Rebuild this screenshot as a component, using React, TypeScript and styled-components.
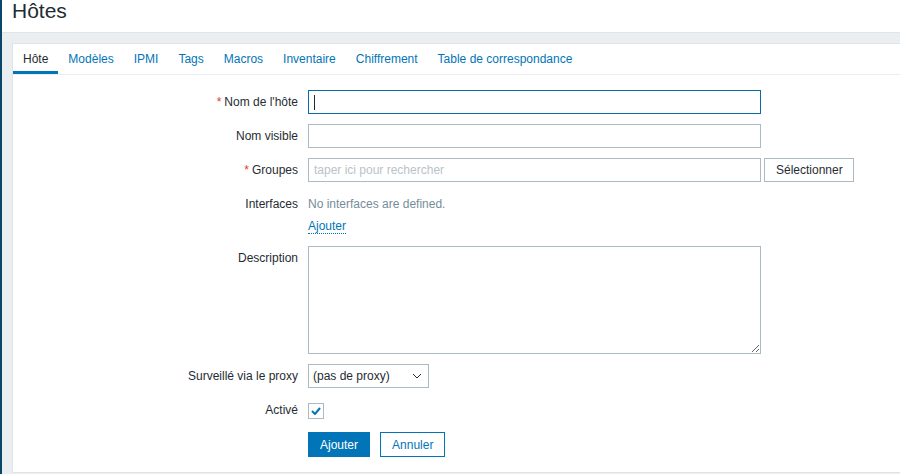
import React from "react";
import styled, { createGlobalStyle } from "styled-components";

const GlobalStyle = createGlobalStyle`
  html, body { margin: 0; padding: 0; }
  body {
    background: #ebeef0;
    overflow: hidden;
    font-family: "Liberation Sans", Arial, sans-serif;
    font-size: 12px;
    color: #1f2c33;
  }
  * { box-sizing: border-box; }
`;

const Page = styled.div`
  display: flex;
  width: 900px;
  height: 474px;
  overflow: hidden;
`;

const Sidebar = styled.div`
  width: 2px;
  flex: none;
  background: #0a466a;
`;

const Main = styled.div`
  flex: 1;
  min-width: 0;
  display: flex;
  flex-direction: column;
`;

const Header = styled.header`
  height: 33px;
  background: #ffffff;
  border-bottom: 1px solid #dfe4e7;
  padding-left: 10px;
`;

const Title = styled.h1`
  margin: -1px 0 0;
  font-size: 21px;
  line-height: 24px;
  font-weight: normal;
  color: #1f2c33;
`;

const Content = styled.div`
  padding: 10px 0 0 10px;
`;

const Panel = styled.section`
  width: 920px;
  background: #ffffff;
  border: 1px solid #dfe4e7;
  border-right: none;
`;

const TabBar = styled.nav`
  display: flex;
  height: 31px;
  border-bottom: 1px solid #ebeef0;
`;

const Tab = styled.a<{ $active?: boolean }>`
  display: block;
  height: 30px;
  padding: 1px 10px 0;
  line-height: 29px;
  color: ${(p) => (p.$active ? "#1f2c33" : "#0275b8")};
  text-decoration: none;
  box-shadow: ${(p) => (p.$active ? "inset 0 -3px 0 #0275b8" : "none")};
  white-space: nowrap;
`;

const Form = styled.div`
  display: grid;
  grid-template-columns: 285px 1fr;
  column-gap: 10px;
  row-gap: 10px;
  padding: 15px 0 15px;
  align-items: start;
`;

const Label = styled.label`
  text-align: right;
  line-height: 24px;
  color: #1f2c33;
  white-space: nowrap;
`;

const Required = styled.span`
  color: #e33734;
  margin-right: 3px;
`;

const Field = styled.div`
  display: flex;
  align-items: center;
  min-height: 24px;
`;

const Stack = styled.div`
  display: flex;
  flex-direction: column;
`;

const TextInput = styled.input`
  width: 453px;
  height: 24px;
  border: 1px solid #acbbc2;
  background: #fff;
  padding: 0 5px;
  font-family: inherit;
  font-size: 12px;
  color: #1f2c33;
  outline: none;
  &::placeholder { color: #b9c3c8; opacity: 1; }
`;

const FocusedBox = styled.div`
  width: 453px;
  height: 24px;
  border: 1px solid #0b6aa4;
  background: #fff;
  padding: 0 5px;
  display: flex;
  align-items: center;
`;

const Caret = styled.span`
  width: 1px;
  height: 15px;
  background: #1f2c33;
`;

const GrayButton = styled.button`
  height: 24px;
  margin-left: 3px;
  padding: 0 11px;
  border: 1px solid #acbbc2;
  background: #fff;
  color: #1f2c33;
  font-family: inherit;
  font-size: 12px;
  width: 90px;
`;

const Muted = styled.span`
  line-height: 24px;
  color: #768d99;
`;

const LinkLine = styled.div`
  height: 20px;
  padding-top: 4px;
  display: flex;
  align-items: flex-start;
`;

const DottedLink = styled.a`
  color: #0275b8;
  text-decoration: none;
  border-bottom: 1px dotted #0275b8;
  line-height: 13px;
`;

const TextArea = styled.textarea`
  display: block;
  width: 453px;
  height: 108px;
  border: 1px solid #acbbc2;
  background: #fff;
  margin: 0;
  padding: 4px 5px;
  font-family: inherit;
  font-size: 12px;
  outline: none;
  resize: both;
`;

const SelectBox = styled.div`
  width: 121px;
  height: 24px;
  border: 1px solid #acbbc2;
  background: #fff;
  padding: 0 6px 0 4px;
  display: flex;
  align-items: center;
  justify-content: space-between;
  color: #1f2c33;
`;

const CheckBox = styled.span`
  width: 16px;
  height: 16px;
  margin-top: 1px;
  border: 1px solid #acbbc2;
  background: #fff;
  display: flex;
  align-items: center;
  justify-content: center;
`;

const Buttons = styled.div`
  display: flex;
  gap: 10px;
`;

const Button = styled.button<{ $primary?: boolean }>`
  height: 25px;
  padding: 0 11px;
  border: 1px solid #0275b8;
  background: ${(p) => (p.$primary ? "#0275b8" : "#ffffff")};
  color: ${(p) => (p.$primary ? "#ffffff" : "#0275b8")};
  font-family: inherit;
  font-size: 12px;
  border-radius: 0;
`;

const tabs = [
  "Hôte",
  "Modèles",
  "IPMI",
  "Tags",
  "Macros",
  "Inventaire",
  "Chiffrement",
  "Table de correspondance",
];

export default function App() {
  return (
    <>
      <GlobalStyle />
      <Page>
        <Sidebar />
        <Main>
          <Header>
            <Title>Hôtes</Title>
          </Header>
          <Content>
            <Panel>
              <TabBar>
                {tabs.map((t, i) => (
                  <Tab key={t} $active={i === 0}>
                    {t}
                  </Tab>
                ))}
              </TabBar>
              <Form>
                <Label>
                  <Required>*</Required>Nom de l'hôte
                </Label>
                <Field>
                  <FocusedBox>
                    <Caret />
                  </FocusedBox>
                </Field>

                <Label>Nom visible</Label>
                <Field>
                  <TextInput />
                </Field>

                <Label>
                  <Required>*</Required>Groupes
                </Label>
                <Field>
                  <TextInput placeholder="taper ici pour rechercher" />
                  <GrayButton>Sélectionner</GrayButton>
                </Field>

                <Label>Interfaces</Label>
                <Stack>
                  <Muted>No interfaces are defined.</Muted>
                  <LinkLine>
                    <DottedLink>Ajouter</DottedLink>
                  </LinkLine>
                </Stack>

                <Label>Description</Label>
                <Field>
                  <TextArea />
                </Field>

                <Label>Surveillé via le proxy</Label>
                <Field>
                  <SelectBox>
                    <span>(pas de proxy)</span>
                    <svg width="10" height="6" viewBox="0 0 10 6">
                      <path d="M1 1 L5 5 L9 1" fill="none" stroke="#1f2c33" strokeWidth="1" />
                    </svg>
                  </SelectBox>
                </Field>

                <Label>Activé</Label>
                <Field>
                  <CheckBox>
                    <svg width="10" height="8" viewBox="0 0 10 8">
                      <path d="M1 4 L4 7 L9 1" fill="none" stroke="#0275b8" strokeWidth="2" />
                    </svg>
                  </CheckBox>
                </Field>

                <span />
                <Buttons>
                  <Button $primary>Ajouter</Button>
                  <Button>Annuler</Button>
                </Buttons>
              </Form>
            </Panel>
          </Content>
        </Main>
      </Page>
    </>
  );
}
